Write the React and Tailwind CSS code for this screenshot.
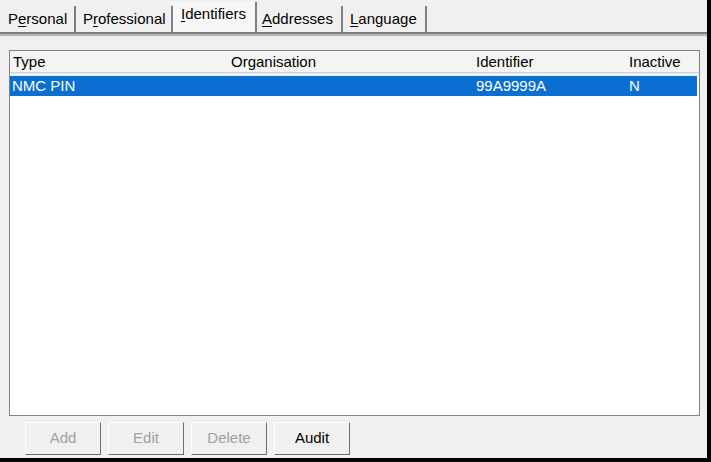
export default function App() {
  const tabs = [
    { pre: "P", key: "e", post: "rsonal", w: "w-[76px] pl-[8px]" },
    { pre: "P", key: "r", post: "ofessional", w: "w-[97px] pl-[7px]" },
    { pre: "", key: "I", post: "dentifiers", w: "w-[84px] pl-[8px]", active: true },
    { pre: "", key: "A", post: "ddresses", w: "w-[86px] pl-[5px]" },
    { pre: "", key: "L", post: "anguage", w: "w-[84px] pl-[7px]" },
  ];
  const buttons = [
    { label: "Add", disabled: true },
    { label: "Edit", disabled: true },
    { label: "Delete", disabled: true },
    { label: "Audit" },
  ];

  return (
    <div className="w-[711px] h-[462px] bg-black font-['Liberation_Sans',Arial,sans-serif] text-[15px] text-black">
      <div className="w-[707px] h-[458px] bg-[#f0f0f0] flex flex-col">
        {/* tab strip */}
        <div className="h-[32px] flex items-end">
          {tabs.map((t, i) => (
            <div
              key={i}
              className={
                t.w +
                (t.active
                  ? " h-[30px] pt-[1px] bg-[#f7f7f7] border-r-2 border-[#808080]"
                  : " h-[26px] pt-[2px] border-r-2 border-[#808080]")
              }
            >
              {t.pre}
              <span className="underline underline-offset-2">{t.key}</span>
              {t.post}
            </div>
          ))}
        </div>
        <div className="h-[4px] border-t-2 border-b border-t-[#7a7a7a] border-b-[#a8a8a8] bg-[#c4c4c4]" />

        {/* list */}
        <div className="mt-[14px] ml-[9px] w-[691px] h-[366px] border border-[#828282] bg-white flex flex-col">
          <div className="h-[22px] flex items-center bg-[#f4f4f4] border-b border-[#d0d0d0] pt-[1px]">
            <div className="w-[219px] pl-[3px]">Type</div>
            <div className="w-[245px] pl-[2px]">Organisation</div>
            <div className="w-[153px] pl-[2px]">Identifier</div>
            <div className="flex-1 pl-[2px]">Inactive</div>
          </div>
          <div className="h-[3px] bg-[#eaf3fc]" />
          <div className="h-[20px] flex items-center bg-[#0a6fd0] text-white mr-[2px]">
            <div className="w-[219px] pl-[2px]">NMC PIN</div>
            <div className="w-[245px]" />
            <div className="w-[153px] pl-[2px]">99A9999A</div>
            <div className="flex-1 pl-[2px]">N</div>
          </div>
        </div>

        {/* buttons */}
        <div className="mt-[6px] ml-[25px] flex gap-[7px]">
          {buttons.map((b) => (
            <div
              key={b.label}
              className={
                "w-[76px] h-[33px] flex items-center justify-center border border-t-white border-l-white border-r-[#6e6e6e] border-b-[#6e6e6e] bg-[#f0f0f0] " +
                (b.disabled ? "text-[#a0a0a0]" : "text-black")
              }
            >
              {b.label}
            </div>
          ))}
        </div>
      </div>
    </div>
  );
}
